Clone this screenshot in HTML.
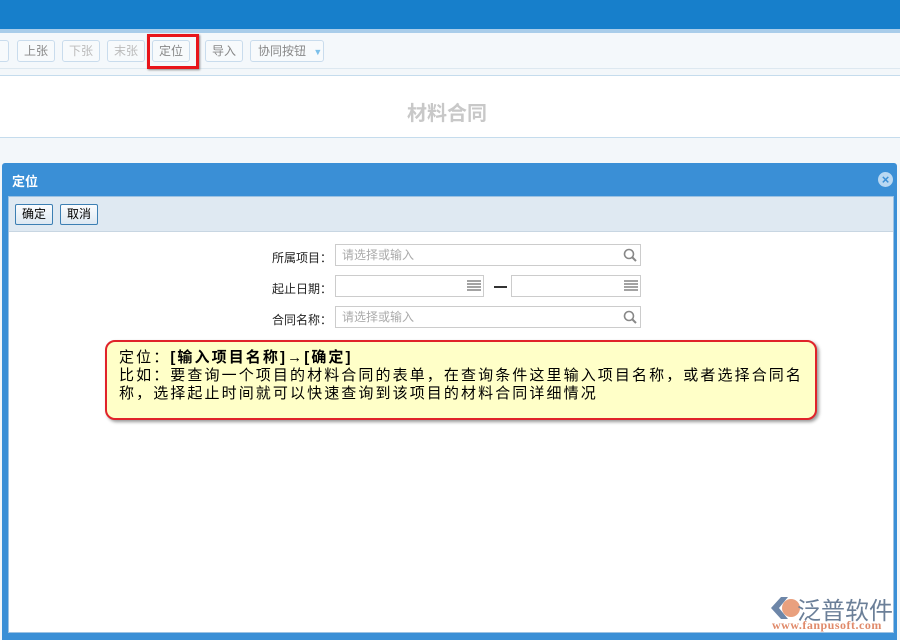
<!DOCTYPE html>
<html><head><meta charset="utf-8"><style>
*{margin:0;padding:0;box-sizing:border-box}
body{width:900px;height:640px;overflow:hidden;background:#f3f7fa;font-family:"Liberation Sans","Noto Sans CJK SC",sans-serif;font-size:12px;position:relative}
.a{position:absolute}
.tb{border:1px solid #c9dced;border-radius:3px;background:#f7fafc;color:#999;height:22px;line-height:20px;text-align:center;font-size:12px}
.inp{border:1px solid #ccc;background:#fff;height:22px;color:#aaa;line-height:20px;padding-left:6px}
.lbl{font-size:12px;color:#222}
.btn{border:1px solid #3c7fb3;border-radius:2px;background:linear-gradient(#fafcfe,#dde8f2);height:21px;line-height:19px;text-align:center;color:#000}
</style></head><body>
<div class="a" style="left:0;top:0;width:900px;height:29px;background:#177fcb"></div>
<div class="a" style="left:0;top:29px;width:900px;height:4px;background:#a9cdea"></div>
<div class="a" style="left:0;top:33px;width:900px;height:36px;background:#f4f8fb;border-bottom:1px solid #dde8f0"></div>
<div class="a tb" style="left:-10px;top:40px;width:19px"></div>
<div class="a tb" style="left:17px;top:40px;width:38px;color:#888">上张</div>
<div class="a tb" style="left:62px;top:40px;width:38px;color:#bbb">下张</div>
<div class="a tb" style="left:107px;top:40px;width:38px;color:#bbb">末张</div>
<div class="a tb" style="left:152px;top:40px;width:38px;color:#888">定位</div>
<div class="a" style="left:147px;top:34px;width:52px;height:35px;border:3px solid #e8141a;box-shadow:1px 1px 2px #888"></div>
<div class="a tb" style="left:205px;top:40px;width:38px;color:#888">导入</div>
<div class="a tb" style="left:250px;top:40px;width:74px;color:#888;text-align:left;padding-left:7px">协同按钮 <span style="color:#7cc0ea;font-size:9px;margin-left:4px">▼</span></div>
<div class="a" style="left:0;top:75px;width:900px;height:63px;background:#fff;border-top:1px solid #c5dced;border-bottom:1px solid #c5dced"></div>
<div class="a" style="left:407px;top:97px;font-size:20px;font-weight:bold;color:#c8c8c8">材料合同</div>
<div class="a" style="left:2px;top:163px;width:895px;height:477px;background:#3a8fd6;border-radius:3px 3px 0 0"></div>
<div class="a" style="left:12px;top:171px;color:#fff;font-weight:bold;font-size:13px">定位</div>
<div class="a" style="left:878px;top:172px;width:15px;height:15px;border-radius:50%;background:#b9d8f2;color:#3a8fd6;font-size:13px;font-weight:bold;text-align:center;line-height:15px">×</div>
<div class="a" style="left:8px;top:196px;width:886px;height:437px;background:#fff;border:1px solid #9cc2e3"></div>
<div class="a" style="left:9px;top:197px;width:884px;height:35px;background:#dfe9f2;border-bottom:1px solid #c8d6e2"></div>
<div class="a btn" style="left:15px;top:204px;width:38px">确定</div>
<div class="a btn" style="left:60px;top:204px;width:38px">取消</div>
<div class="a lbl" style="left:272px;top:249px">所属项目：</div>
<div class="a inp" style="left:335px;top:244px;width:306px">请选择或输入</div>
<div class="a lbl" style="left:272px;top:280px">起止日期：</div>
<div class="a inp" style="left:335px;top:275px;width:149px"></div>
<div class="a" style="left:494px;top:286px;width:13px;height:2px;background:#333"></div>
<div class="a inp" style="left:511px;top:275px;width:130px"></div>
<div class="a lbl" style="left:272px;top:311px">合同名称：</div>
<div class="a inp" style="left:335px;top:306px;width:306px">请选择或输入</div>
<svg class="a" style="left:623px;top:248px" width="14" height="14"><circle cx="6" cy="6" r="4.5" stroke="#888" stroke-width="1.6" fill="none"/><line x1="9" y1="9" x2="13" y2="13" stroke="#888" stroke-width="2"/></svg>
<svg class="a" style="left:623px;top:310px" width="14" height="14"><circle cx="6" cy="6" r="4.5" stroke="#888" stroke-width="1.6" fill="none"/><line x1="9" y1="9" x2="13" y2="13" stroke="#888" stroke-width="2"/></svg>
<div class="a" style="left:467px;top:280px;width:14px;height:11px;background:repeating-linear-gradient(0deg,#999 0 2px,#fff 2px 3px);opacity:.9"></div>
<div class="a" style="left:624px;top:280px;width:14px;height:11px;background:repeating-linear-gradient(0deg,#999 0 2px,#fff 2px 3px);opacity:.9"></div>
<div class="a" style="left:105px;top:340px;width:712px;height:80px;background:#ffffc8;border:2px solid #e0232a;border-radius:10px;box-shadow:2px 2px 3px #999;padding:7px 6px 8px 12px;font-size:15px;line-height:18px;color:#000;letter-spacing:2.1px">定位：<b>[输入项目名称]</b>→<b>[确定]</b><br>比如：要查询一个项目的材料合同的表单，在查询条件这里输入项目名称，或者选择合同名称，选择起止时间就可以快速查询到该项目的材料合同详细情况</div>
<svg class="a" style="left:768px;top:594px" width="34" height="28"><path d="M3 14 L13 3 L20 3 L11 14 L20 25 L13 25Z" fill="#6d86a8"/><circle cx="23" cy="14" r="9" fill="#e9a07e"/></svg>
<div class="a" style="left:797px;top:591px;font-size:24px;color:#6b7f98;letter-spacing:0px">泛普软件</div>
<div class="a" style="left:772px;top:618px;font-size:12px;color:#e08a6a;font-family:'Liberation Serif',serif;font-weight:bold;letter-spacing:0.5px">www.fanpusoft.com</div>
</body></html>
